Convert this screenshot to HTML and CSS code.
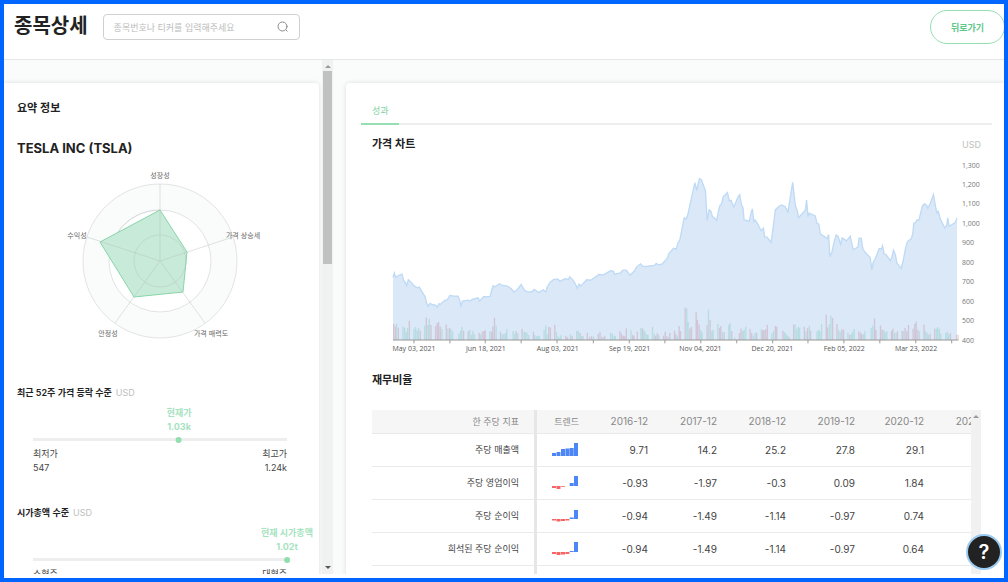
FILE: index.html
```html
<!DOCTYPE html>
<html lang="ko">
<head>
<meta charset="utf-8">
<meta name="viewport" content="width=device-width, initial-scale=1">
<title>종목상세</title>
<link rel="stylesheet" href="styles.css">
</head>
<body>
<div class="frame">
  <header class="header">
    <h1 class="page-title">종목상세</h1>
    <form class="search" role="search">
      <input class="search-input" type="text" aria-label="종목 검색" placeholder="종목번호나 티커를 입력해주세요">
      <button class="search-button" type="button" aria-label="검색">
        <svg width="12" height="12" viewBox="0 0 12 12" fill="none" stroke="#8c8c8c" stroke-linecap="round"><circle cx="5.5" cy="5.5" r="4.5"/><path d="M9 9l1.200 1.200"/></svg>
      </button>
    </form>
    <button class="back" type="button">뒤로가기</button>
  </header>

  <div class="content">
    <aside class="side">
      <section class="card summary">
        <h2 class="heading">요약 정보</h2>
        <h3 class="company">TESLA INC (TSLA)</h3>
        <svg class="radar" width="200" height="190" viewBox="0 0 200 190" role="img" aria-label="종목 평가">
          <g stroke="#e3e3e3">
            <circle cx="100" cy="101" r="77" fill="#fafcfb"/>
            <circle cx="100" cy="101" r="51" fill="#fff"/>
            <circle cx="100" cy="101" r="26" fill="#fafcfb"/>
          </g>
          <path d="M100 50L127 92L123 132L74 137L40 82Z" fill="#c8ead8" stroke="#86d6a9"/>
          <path d="M100 101V24M100 101L173 77M100 101L145 163M100 101L55 163M100 101L27 77" stroke="#b4c4bb" stroke-opacity=".45" fill="none"/>
          <circle cx="100" cy="101" r="26" fill="none" stroke="#b4c4bb" stroke-opacity=".45"/>
          <path d="M57 73A51 51 0 0 1 100 50" fill="none" stroke="#b4c4bb" stroke-opacity=".35"/>
          <g class="radar-label">
            <text x="100" y="18">성장성</text>
            <text x="183" y="78">가격 상승세</text>
            <text x="151" y="176">가격 매력도</text>
            <text x="48" y="176">안정성</text>
            <text x="17" y="78">수익성</text>
          </g>
        </svg>

        <div class="level">
          <h4 class="level-title">최근 52주 가격 등락 수준<span class="unit">USD</span></h4>
          <div class="scale">
            <div class="marker" style="left:57.5%"><span>현재가</span><span>1.03k</span></div>
            <div class="track"></div>
            <div class="ends"><div>최저가<br>547</div><div class="end-high">최고가<br>1.24k</div></div>
          </div>
        </div>
        <div class="level">
          <h4 class="level-title">시가총액 수준<span class="unit">USD</span></h4>
          <div class="scale">
            <div class="marker" style="left:100%"><span>현재 시가총액</span><span>1.02t</span></div>
            <div class="track"></div>
            <div class="ends"><div>소형주</div><div class="end-high">대형주</div></div>
          </div>
        </div>
      </section>
      <div class="scrollbar" aria-hidden="true">
        <i class="arrow up"></i><i class="thumb"></i><i class="arrow down"></i>
      </div>
    </aside>

    <main class="card detail">
      <nav class="tabs"><a class="tab" href="#performance">성과</a></nav>
      <section class="block" id="performance">
        <div class="block-head"><h2 class="heading">가격 차트</h2><span class="unit">USD</span></div>
        <svg class="chart" viewBox="0 0 600 200" role="img" aria-label="가격 차트">
          <g transform="translate(-11 0) scale(.33333)">
            <path id="area" fill="#dbe8f8"/>
            <path id="line" fill="none" stroke="#bfdaf5" stroke-width="4"/>
            <path id="down" class="bars" stroke="#d0c6d6"/>
            <path id="up" class="bars" stroke="#b7dce2"/>
            <path d="M1735 525V541" class="bars" stroke="#efe0d2"/>
            <path d="M36 541H1735M99 541v10M207 541v10M313 541v10M421 541v10M529 541v10M638 541v10M746 541v10M853 541v10M961 541v10M1069 541v10M1177 541v10M1283 541v10M1391 541v10M1499 541v10M1607 541v10M1715 541v10" stroke="#999" stroke-width="3" fill="none"/>
          </g>
          <g class="x-label">
            <text x="22" y="191">May 03, 2021</text><text x="94" y="191">Jun 18, 2021</text><text x="166" y="191">Aug 03, 2021</text><text x="238" y="191">Sep 19, 2021</text><text x="309" y="191">Nov 04, 2021</text><text x="381" y="191">Dec 20, 2021</text><text x="453" y="191">Feb 05, 2022</text><text x="525" y="191">Mar 23, 2022</text>
          </g>
          <g class="y-label">
            <text x="571" y="8">1,300</text><text x="571" y="27">1,200</text><text x="571" y="46">1,100</text><text x="571" y="66">1,000</text><text x="571" y="85">900</text><text x="571" y="105">800</text><text x="571" y="124">700</text><text x="571" y="144">600</text><text x="571" y="163">500</text><text x="571" y="183">400</text>
          </g>
        </svg>
      </section>

      <section class="block ratios">
        <h2 class="heading">재무비율</h2>
        <div class="table-box">
          <div class="table-view">
            <table class="table">
              <colgroup><col class="c-name"><col class="c-trend"><col><col><col><col><col><col></colgroup>
              <thead><tr><th>한 주당 지표</th><th>트렌드</th><th>2016-12</th><th>2017-12</th><th>2018-12</th><th>2019-12</th><th>2020-12</th><th>2021-12</th></tr></thead>
              <tbody>
                <tr><th>주당 매출액</th><td><svg class="trend" viewBox="0 0 27 16"><path fill="#4d86f7" d="M0 11h4v3H0zM4.500 10h4v4h-4zM9 7h4v7H9zM13.400 6.500h4V14h-4zM17.700 6h4v8h-4zM22 1h4v13h-4z"/></svg></td><td>9.71</td><td>14.2</td><td>25.2</td><td>27.8</td><td>29.1</td><td></td></tr>
                <tr><th>주당 영업이익</th><td><svg class="trend" viewBox="0 0 27 16"><path fill="#f86464" d="M0 11h4v2H0zM4.500 11h4v3h-4zM9 11h4v.7H9z"/><path fill="#4d86f7" d="M17.700 8h4v3h-4zM22 1h4v10h-4z"/></svg></td><td>-0.93</td><td>-1.97</td><td>-0.3</td><td>0.09</td><td>1.84</td><td></td></tr>
                <tr><th>주당 순이익</th><td><svg class="trend" viewBox="0 0 27 16"><path fill="#f86464" d="M0 11h4v1.500H0zM4.500 11h4v2.500h-4zM9 11h4v2H9zM13.400 11h4v1.500h-4z"/><path fill="#4d86f7" d="M17.700 9.500h4V11h-4zM22 2h4v9h-4z"/></svg></td><td>-0.94</td><td>-1.49</td><td>-1.14</td><td>-0.97</td><td>0.74</td><td></td></tr>
                <tr><th>희석된 주당 순이익</th><td><svg class="trend" viewBox="0 0 27 16"><path fill="#f86464" d="M0 11h4v2H0zM4.500 11h4v3h-4zM9 11h4v2.500H9zM13.400 11h4v2h-4z"/><path fill="#4d86f7" d="M17.700 10h4v1h-4zM22 1h4v10h-4z"/></svg></td><td>-0.94</td><td>-1.49</td><td>-1.14</td><td>-0.97</td><td>0.64</td><td></td></tr>
                <tr><th></th><td><svg class="trend" viewBox="0 0 27 16"><path fill="#4d86f7" d="M22 1h4v10h-4z"/></svg></td><td></td><td></td><td></td><td></td><td></td><td></td></tr>
              </tbody>
            </table>
          </div>
          <div class="scrollbar" aria-hidden="true"><i class="arrow up"></i></div>
        </div>
      </section>
    </main>
  </div>
  <button class="help" type="button" aria-label="도움말">?</button>
</div>
<script src="chart.js"></script>
</body>
</html>
```

FILE: styles.css
```css
* { box-sizing: border-box; }
body {
  margin: 0;
  font-family: Inter, "Noto Sans CJK KR", sans-serif;
  font-size: 9px;
  color: #444;
}
h1, h2, h3, h4 { margin: 0; color: #222; }
button { font: inherit; cursor: pointer; }

.frame {
  position: relative;
  display: flex;
  flex-direction: column;
  height: 100vh;
  border: 4px solid #0066ff;
  padding-bottom: 4px;
  overflow: hidden;
  background: #fff;
}

.header {
  display: flex;
  flex: none;
  align-items: flex-start;
  height: 56px;
  padding: 6px 0 0 10px;
  border-bottom: 1px solid #e6e8e7;
}
.page-title { font-size: 20px; line-height: 32px; font-weight: 700; }
.search {
  display: flex;
  align-items: center;
  width: 197px;
  height: 26px;
  margin: 4px auto 0 15px;
  padding: 0 10px;
  border: 1px solid #d0d0d0;
  border-radius: 4px;
}
.search-input {
  flex: 1;
  min-width: 0;
  border: 0;
  padding: 0;
  outline: 0;
  font: inherit;
  background: none;
}
.search-input::placeholder { color: #bbb; }
.search-button { display: flex; padding: 0; border: 0; background: none; }
.back {
  width: 75px;
  height: 34px;
  margin-right: -1px;
  border: 1px solid #96dfb4;
  border-radius: 17px;
  background: #fff;
  color: #5cc88a;
  font-weight: 700;
}

.content {
  display: flex;
  flex: 1;
  min-height: 0;
  overflow: hidden;
  background: #fafcfb;
}
.side { display: flex; flex: none; width: 329px; overflow: hidden; }
.card {
  background: #fff;
  box-shadow: 0 0 5px rgba(0, 0, 0, .12);
}
.summary {
  flex: 1;
  height: 600px;
  margin: 23px 3px 0 0;
  padding: 15px 13px;
  border-radius: 0 4px 4px 0;
}
.heading { font-size: 11px; line-height: 20px; font-weight: 600; }
.company { margin-top: 20px; font-size: 13px; line-height: 20px; font-weight: 700; }
.radar { display: block; margin: 2px 0 33px 43px; }
.radar-label { font-size: 7px; fill: #666; text-anchor: middle; }
.level { height: 120px; }
.level-title { font-size: 9px; line-height: 20px; font-weight: 600; }
.unit { color: #c0c0c0; font-weight: 400; font-size: 9px; }
.level-title .unit { margin-left: 4px; }
.scale { position: relative; margin: 0 19px 0 16px; padding-top: 35px; }
.marker {
  position: absolute;
  top: 3px;
  display: flex;
  flex-direction: column;
  align-items: center;
  transform: translateX(-50%);
  white-space: nowrap;
  line-height: 14px;
  font-weight: 700;
  color: #a5e3bf;
}
.marker::after {
  content: "";
  width: 6px;
  height: 6px;
  margin-top: 3px;
  border-radius: 50%;
  background: #92deb1;
}
.track { height: 3px; background: #eee; }
.ends { display: flex; justify-content: space-between; margin-top: 6px; line-height: 14px; }
.end-high { text-align: right; }

.scrollbar {
  display: flex;
  flex: none;
  flex-direction: column;
  align-items: center;
  width: 11px;
  background: #f1f1f1;
}
.arrow { border: 3px solid transparent; }
.up { margin-top: 2px; border-bottom-color: #999; }
.down { margin: auto 0 2px; border-top-color: #555; }
.side .thumb { width: 9px; height: 193px; margin-top: 3px; background: #c1c1c1; }

.detail {
  flex: 1;
  min-width: 0;
  height: 600px;
  margin: 23px 0 0 13px;
  padding: 16px 12px 0 15px;
  border-radius: 4px 0 0 0;
}
.tabs { display: flex; border-bottom: 2px solid #eee; }
.tab {
  margin-bottom: -2px;
  padding: 4px 10px 4px 11px;
  border-bottom: 2px solid #96dfb4;
  line-height: 16px;
  color: #7fd3a3;
  text-decoration: none;
}
.block { padding: 9px 11px 0; }
.ratios { padding-top: 10px; }
.block-head { display: flex; justify-content: space-between; align-items: center; }
.chart { display: block; width: calc(100% - 10px); margin: 6px 0 0 20px; overflow: visible; }
.bars { stroke-width: 4; fill: none; }
.x-label, .y-label { font-family: "Open Sans", "Noto Sans", sans-serif; font-size: 7px; fill: #555; }
.x-label { text-anchor: middle; }
.y-label { fill: #777; }

.table-box { display: flex; height: 165px; margin-top: 20px; }
.table-view { flex: 1; min-width: 0; overflow: hidden; }
.table-box .scrollbar { width: 10px; }
.table {
  width: 636px;
  table-layout: fixed;
  border-collapse: separate;
  border-spacing: 0;
  text-align: right;
  font-size: 10px;
}
.c-name { width: 165px; }
.c-trend { width: 57px; }
.table th, .table td {
  height: 33px;
  padding: 0 15px 0 0;
  border-bottom: 1px solid #eaeaea;
  font-weight: 400;
  white-space: nowrap;
}
.table thead th { height: 24px; background: #f6f6f6; color: #888; }
.table tr > :first-child { border-right: 3px solid #e6e6e6; }
.table tr > :first-child, .table thead th:nth-child(2) { font-size: 9px; }
.trend { display: block; width: 27px; height: 16px; margin-left: 15px; }

.help {
  position: absolute;
  right: 2px;
  bottom: 8px;
  width: 36px;
  height: 36px;
  padding: 0;
  border: 2px solid #9ccbf0;
  border-radius: 50%;
  background: #222;
  color: #fff;
  font-size: 20px;
  font-weight: 600;
}
```

FILE: chart.js
```js
// Closing prices as x,y pairs in plot units.
const price = `36,353 40,340 44,353 52,347 63,343 68,362 73,368 77,378 82,360 90,367 100,379 109,384 115,382
122,394 133,412 137,430 142,440 147,431 156,435 165,437 169,443 174,432 178,434 186,427 193,421 199,420 207,407
219,409 231,409 236,420 240,439 245,424 261,421 268,424 274,419 292,414 296,424 308,411 328,410 332,393 337,378
343,381 356,372 364,377 378,378 392,387 399,397 410,389 421,374 430,390 440,397 454,396 460,389 474,398 488,390
495,397 500,380 508,368 519,359 532,358 537,365 553,357 563,359 567,351 577,361 585,374 590,386 595,373 600,379
618,360 631,361 655,344 668,345 690,333 698,334 702,343 720,339 727,331 737,331 748,346 762,333 768,321 780,312
786,319 797,320 822,317 827,311 833,315 846,312 850,306 860,296 865,281 879,265 887,268 892,250 898,240 904,210
911,174 917,178 922,164 943,68 949,92 954,66 957,56 963,60 975,93 980,182 986,150 991,153 996,170 1009,181 1014,154
1018,138 1023,132 1029,109 1041,98 1047,124 1052,121 1060,142 1073,111 1078,104 1083,134 1088,145 1091,180 1107,184
1112,158 1116,147 1120,185 1124,180 1133,194 1142,213 1149,205 1153,231 1160,232 1172,248 1176,220 1180,190
1185,150 1196,139 1204,135 1214,140 1223,156 1237,67 1245,137 1251,153 1255,173 1275,151 1279,120 1283,170
1287,160 1305,168 1310,190 1316,193 1320,222 1341,236 1345,224 1349,291 1355,277 1362,244 1368,225 1374,230
1381,254 1386,234 1399,243 1410,229 1419,270 1433,262 1437,235 1443,235 1448,267 1455,278 1470,293 1475,330
1479,307 1485,297 1497,266 1504,267 1507,258 1512,282 1518,285 1531,303 1536,289 1540,271 1546,285 1550,309
1563,326 1569,303 1577,262 1582,245 1594,236 1598,220 1601,190 1607,187 1610,180 1616,181 1627,138 1633,132
1639,135 1643,145 1650,132 1660,104 1667,143 1671,160 1675,155 1680,176 1694,204 1700,196 1703,174 1707,199
1725,189 1731,174`.split(/\s+/);
document.getElementById("line").setAttribute("d", "M" + price.join("L"));
document.getElementById("area").setAttribute("d", "M36,541L" + price.join("L") + "V541Z");

// Trading volume: bar position and top edge, split by direction of the day.
const volume = {
  down: `38,492 43,500 52,504 85,483 118,513 136,473 150,496 164,498 169,490 173,486 178,500 196,494 206,505 248,513
262,515 295,519 304,516 309,514 313,512 332,516 336,500 341,474 359,516 406,515 424,508 458,516 504,502 509,503
522,495 555,528 560,532 574,528 598,520 620,519 627,531 633,530 653,522 658,517 667,532 672,528 718,514 723,522
728,528 732,530 737,506 756,526 760,528 770,516 785,506 825,528 830,521 849,528 854,516 859,530 868,520 882,513
886,524 896,499 900,514 914,444 928,506 933,502 947,456 951,480 956,494 980,496 989,480 1017,504 1021,499
1031,518 1054,514 1077,520 1082,506 1109,507 1114,520 1129,519 1147,512 1151,511 1156,508 1161,495 1185,499
1189,501 1208,513 1226,531 1240,494 1272,501 1282,505 1291,513 1338,465 1342,503 1357,475 1370,493 1385,509
1390,510 1408,525 1436,515 1441,519 1445,524 1483,476 1487,510 1501,497 1506,510 1534,514 1538,507 1552,515
1566,513 1575,505 1580,515 1585,496 1599,507 1604,493 1608,485 1613,510 1632,495 1650,522 1664,507 1711,520 1730,525`,
  up: `47,492 66,500 71,504 76,516 80,504 99,507 104,502 109,512 113,505 131,498 141,495 145,478 183,508 201,506
210,508 215,515 234,522 239,513 243,501 267,510 272,526 276,514 281,524 299,524 327,514 346,498 364,524 369,522
374,520 378,508 397,514 402,522 411,520 430,516 434,517 439,519 444,526 462,526 467,530 472,528 476,530 490,510
495,497 499,524 527,516 532,530 537,534 541,527 569,524 588,513 593,514 603,528 607,529 639,531 662,531 690,519
695,522 700,530 704,528 751,511 781,504 789,510 793,516 798,524 802,526 816,501 821,522 835,526 863,532 891,530
919,446 923,487 961,510 965,518 984,450 994,515 998,510 1012,493 1026,516 1045,496 1049,490 1063,534 1087,514
1091,510 1096,501 1119,528 1124,519 1143,508 1175,520 1180,514 1213,518 1217,522 1221,528 1244,494 1249,507
1254,501 1258,504 1277,515 1287,498 1310,515 1315,510 1319,514 1324,493 1347,493 1352,468 1375,510 1380,516
1403,519 1413,524 1417,516 1422,508 1450,523 1454,515 1473,504 1478,498 1511,511 1515,518 1520,515 1543,519
1548,520 1571,514 1618,515 1636,513 1641,519 1645,526 1669,506 1673,502 1678,507 1682,522 1697,519 1702,516 1706,524`
};
for (const [id, bars] of Object.entries(volume)) {
  const d = bars.split(/\s+/).map(b => {
    const [x, top] = b.split(",");
    return `M${x} 541V${top}`;
  });
  document.getElementById(id).setAttribute("d", d.join(""));
}
```
